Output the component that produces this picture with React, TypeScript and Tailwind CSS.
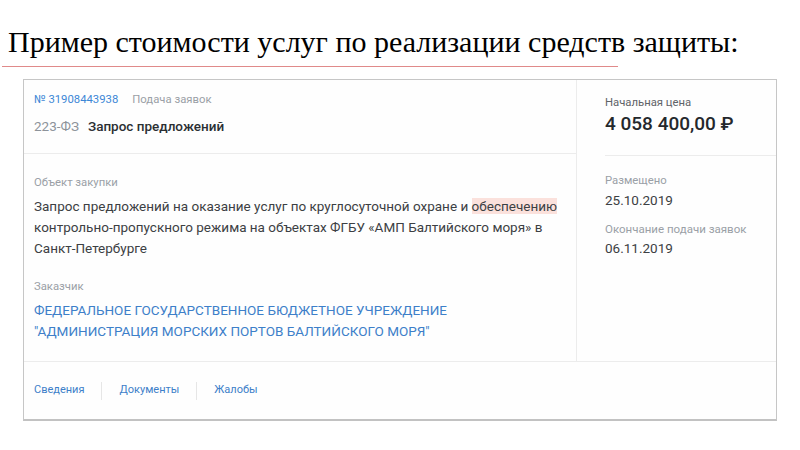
export default function App() {
  return (
    <div className="w-[800px] h-[450px] bg-white overflow-hidden relative">
      <div className="h-[79px] relative">
        <h1
          className="absolute left-[8px] top-[24px] text-[30px] leading-[36px] text-black whitespace-nowrap"
          style={{ fontFamily: '"Liberation Serif", "Times New Roman", serif' }}
        >
          Пример стоимости услуг по реализации средств защиты:
        </h1>
        <div className="absolute left-[2px] top-[66px] w-[616px] h-px bg-[#e08a8a]" />
      </div>

      <div
        className="ml-[23px] w-[754px] h-[342px] border border-[#c6c6c6] border-b-2 border-b-[#c2c2c2] bg-[#fefefe] flex flex-col"
        style={{ fontFamily: 'Roboto, "Noto Sans", sans-serif' }}
      >
        <div className="flex h-[282px] border-b border-[#ececec]">
          <div className="w-[553px] border-r border-[#ececec] flex flex-col">
            <div className="h-[74px] border-b border-[#ececec] pl-[10px] pt-[12px]">
              <div className="flex items-center gap-[14px] text-[11.3px] leading-[16px]">
                <span className="text-[#3d87d6]">№ 31908443938</span>
                <span className="text-[#9aa0a6]">Подача заявок</span>
              </div>
              <div className="flex items-center gap-[9px] mt-[9px] text-[13.5px] leading-[18px]">
                <span className="text-[#8d939a]">223-ФЗ</span>
                <span className="text-[#2b2f33] font-medium">Запрос предложений</span>
              </div>
            </div>
            <div className="pl-[10px] pt-[21px]">
              <div className="text-[11.3px] leading-[16px] text-[#9aa0a6]">Объект закупки</div>
              <p className="mt-[5px] text-[13.5px] leading-[21px] text-[#3c4043]">
                Запрос предложений на оказание услуг по круглосуточной охране и{' '}
                <span className="bg-[#fbe1dc]">обеспечению</span>
                <br />
                контрольно-пропускного режима на объектах ФГБУ «АМП Балтийского моря» в
                <br />
                Санкт-Петербурге
              </p>
              <div className="mt-[20px] text-[11.3px] leading-[16px] text-[#9aa0a6]">Заказчик</div>
              <div className="mt-[5px] text-[13.5px] leading-[21px] text-[#3d7fc9]">
                ФЕДЕРАЛЬНОЕ ГОСУДАРСТВЕННОЕ БЮДЖЕТНОЕ УЧРЕЖДЕНИЕ
                <br />
                "АДМИНИСТРАЦИЯ МОРСКИХ ПОРТОВ БАЛТИЙСКОГО МОРЯ"
              </div>
            </div>
          </div>

          <div className="flex-1 pl-[28px] flex flex-col">
            <div className="h-[76px] border-b border-[#ececec] pt-[15px]">
              <div className="text-[11.3px] leading-[16px] text-[#5f6368]">Начальная цена</div>
              <div className="mt-[1px] text-[19px] leading-[24px] font-medium text-[#24282c]">4 058 400,00 ₽</div>
            </div>
            <div className="pt-[17px]">
              <div className="text-[11.3px] leading-[16px] text-[#9aa0a6]">Размещено</div>
              <div className="mt-[2px] text-[13.5px] leading-[18px] text-[#3c4043]">25.10.2019</div>
              <div className="mt-[12px] text-[11.5px] leading-[16px] text-[#9aa0a6]">Окончание подачи заявок</div>
              <div className="mt-[2px] text-[13.5px] leading-[18px] text-[#3c4043]">06.11.2019</div>
            </div>
          </div>
        </div>

        <div className="flex-1 flex items-center pl-[10px] text-[11px] text-[#3d7fc9]">
          <span>Сведения</span>
          <span className="mx-[17px] w-px h-[18px] bg-[#e6e6e6]" />
          <span>Документы</span>
          <span className="mx-[17px] w-px h-[18px] bg-[#e6e6e6]" />
          <span>Жалобы</span>
        </div>
      </div>
    </div>
  );
}
